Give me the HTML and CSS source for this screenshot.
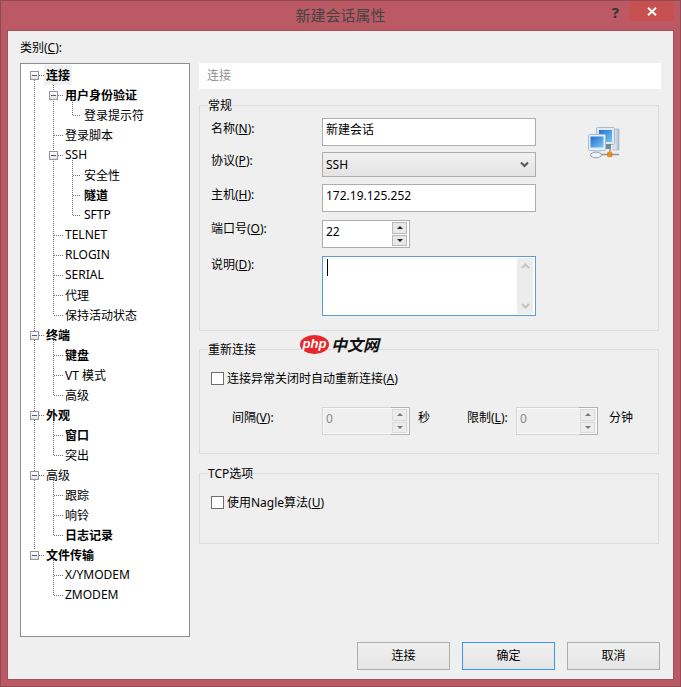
FILE: index.html
```html
<!DOCTYPE html>
<html lang="zh">
<head>
<meta charset="utf-8">
<title>新建会话属性</title>
<link rel="stylesheet" href="styles.css">
</head>
<body>
<div class="window">
  <header class="titlebar">
    <span></span>
    <h1 class="title">新建会话属性</h1>
    <div class="controls">
      <span class="help">?</span>
      <span class="close"><svg width="10" height="9" viewBox="0 0 10 9"><path d="M1 .8 9 8.2M9 .8 1 8.2" stroke="#fff" stroke-width="1.9" fill="none"/></svg></span>
    </div>
  </header>
  <main class="client">
    <div class="cat-label">类别(<u>C</u>):</div>
    <div class="content">
      <nav class="tree">
        <svg class="tree-lines" width="168" height="572" viewBox="21 64 168 572">
          <path d="M34.5 80V550M39 75.5h6M39 335.5h6M39 415.5h6M39 475.5h6M39 555.5h6
                   M53.5 85V315M58 95.5h5M54 135.5h9M58 155.5h5M54 235.5h9M54 255.5h9M54 275.5h9M54 295.5h9M54 315.5h9
                   M72.5 100V115M73 115.5h8M72.5 160V215M73 175.5h8M73 195.5h8M73 215.5h8
                   M53.5 340V395M54 355.5h9M54 375.5h9M54 395.5h9
                   M53.5 420V455M54 435.5h9M54 455.5h9
                   M53.5 480V535M54 495.5h9M54 515.5h9M54 535.5h9
                   M53.5 560V595M54 575.5h9M54 595.5h9" stroke="#6f6f6f" stroke-dasharray="1 1" fill="none" shape-rendering="crispEdges"/>
        </svg>
        <div class="row l0"><i class="exp"></i><b class="sel">连接</b></div>
        <div class="row l1"><i class="exp"></i><b>用户身份验证</b></div>
        <div class="row l2">登录提示符</div>
        <div class="row l1 leaf">登录脚本</div>
        <div class="row l1 lat"><i class="exp"></i>SSH</div>
        <div class="row l2">安全性</div>
        <div class="row l2"><b>隧道</b></div>
        <div class="row l2 lat">SFTP</div>
        <div class="row l1 leaf lat">TELNET</div>
        <div class="row l1 leaf lat">RLOGIN</div>
        <div class="row l1 leaf lat">SERIAL</div>
        <div class="row l1 leaf">代理</div>
        <div class="row l1 leaf">保持活动状态</div>
        <div class="row l0"><i class="exp"></i><b>终端</b></div>
        <div class="row l1 leaf"><b>键盘</b></div>
        <div class="row l1 leaf">VT 模式</div>
        <div class="row l1 leaf">高级</div>
        <div class="row l0"><i class="exp"></i><b>外观</b></div>
        <div class="row l1 leaf"><b>窗口</b></div>
        <div class="row l1 leaf">突出</div>
        <div class="row l0"><i class="exp"></i>高级</div>
        <div class="row l1 leaf">跟踪</div>
        <div class="row l1 leaf">响铃</div>
        <div class="row l1 leaf"><b>日志记录</b></div>
        <div class="row l0"><i class="exp"></i><b>文件传输</b></div>
        <div class="row l1 leaf lat">X/YMODEM</div>
        <div class="row l1 leaf lat">ZMODEM</div>
      </nav>
      <section class="panel">
        <div class="panel-head">连接</div>

        <div class="group group-general">
          <div class="legend">常规</div>
          <div class="form">
            <label class="lbl low">名称(<u>N</u>):</label>
            <div class="field wide">新建会话</div>
            <label class="lbl">协议(<u>P</u>):</label>
            <div class="select wide"><span>SSH</span>
              <svg width="9" height="7" viewBox="0 0 9 7"><path d="M1 1.500 4.500 5 8 1.500" stroke="#555" stroke-width="2" fill="none"/></svg>
            </div>
            <label class="lbl low">主机(<u>H</u>):</label>
            <div class="field wide">172.19.125.252</div>
            <label class="lbl">端口号(<u>O</u>):</label>
            <div class="spin">
              <span class="spin-val">22</span>
              <span class="spin-btns"><i class="up"></i><i class="down"></i></span>
            </div>
            <label class="lbl">说明(<u>D</u>):</label>
            <div class="memo wide">
              <span class="caret"></span>
              <div class="memo-scroll">
                <svg width="9" height="6" viewBox="0 0 9 6"><path d="M1 5 4.500 1.500 8 5" stroke="#c2c2c2" stroke-width="2" fill="none"/></svg>
                <svg width="9" height="6" viewBox="0 0 9 6"><path d="M1 1 4.500 4.500 8 1" stroke="#c2c2c2" stroke-width="2" fill="none"/></svg>
              </div>
            </div>
          </div>
          <svg class="net-icon" width="36" height="36" viewBox="0 0 36 36">
            <defs>
              <linearGradient id="scr" x1="0" y1="0" x2="1" y2="1">
                <stop offset="0" stop-color="#1c6fd8"/><stop offset="1" stop-color="#7cc6ee"/>
              </linearGradient>
              <linearGradient id="case" x1="0" y1="0" x2="1" y2="0">
                <stop offset="0" stop-color="#f4f7fa"/><stop offset="1" stop-color="#a9bccb"/>
              </linearGradient>
            </defs>
            <rect x="26" y="3" width="6" height="21" fill="url(#case)" stroke="#9fb0bd" stroke-width=".6"/>
            <rect x="9.500" y="1.500" width="18" height="17" rx="1" fill="#dfeaf2" stroke="#a9bac8"/>
            <rect x="12" y="4" width="13" height="12" fill="url(#scr)"/>
            <path d="M14 18h10v5H14z" fill="#6f8a9b"/>
            <path d="M12 28.500H32" stroke="#8d9aa6" stroke-width="1.600"/>
            <rect x="1.500" y="8.500" width="17" height="16" rx="1" fill="#e6f0f6" stroke="#a9bac8"/>
            <rect x="3.500" y="10.500" width="13" height="11" fill="url(#scr)"/>
            <path d="M6 24.500h8v2H6z" fill="#cfdbe3"/>
            <ellipse cx="9" cy="29" rx="5.500" ry="2.800" fill="#eef3f7" stroke="#94a6b3"/>
            <path d="M23 22.500v4" stroke="#8d9aa6" stroke-width="1.500"/>
            <rect x="20.500" y="26.200" width="4.500" height="4.500" rx=".8" fill="#ee8c10" stroke="#c66d06" stroke-width=".5"/>
          </svg>
        </div>

        <div class="group group-reconnect">
          <div class="legend">重新连接</div>
          <div class="check-row"><span class="check"></span><span>连接异常关闭时自动重新连接(<u>A</u>)</span></div>
          <div class="limits">
            <span class="lim-label lim-interval">间隔(<u>V</u>):</span>
            <div class="spin disabled">
              <span class="spin-val">0</span>
              <span class="spin-btns"><i class="up"></i><i class="down"></i></span>
            </div>
            <span class="unit unit-sec">秒</span>
            <span class="lim-label lim-max">限制(<u>L</u>):</span>
            <div class="spin disabled narrow">
              <span class="spin-val">0</span>
              <span class="spin-btns"><i class="up"></i><i class="down"></i></span>
            </div>
            <span class="unit unit-min">分钟</span>
          </div>
        </div>

        <div class="group group-tcp">
          <div class="legend">TCP选项</div>
          <div class="check-row"><span class="check"></span><span>使用Nagle算法(<u>U</u>)</span></div>
        </div>
      </section>
    </div>
    <footer class="buttons">
      <button class="btn">连接</button>
      <button class="btn primary">确定</button>
      <button class="btn">取消</button>
    </footer>
    <div class="watermark"><span class="wm-php">php</span><span class="wm-cn">中文网</span></div>
  </main>
</div>
</body>
</html>
```
FILE: styles.css
```css
* { box-sizing: border-box; }
html, body { margin: 0; padding: 0; }
body {
  width: 681px;
  height: 687px;
  overflow: hidden;
  font: 12px/20px "Noto Sans", "Noto Sans CJK SC", sans-serif;
  color: #000;
  background: #bb5a64;
}
u { text-decoration: underline; text-underline-offset: 1px; }
b { font-weight: 700; }
i { font-style: normal; }

.window {
  width: 681px;
  height: 687px;
  display: flex;
  flex-direction: column;
  padding: 0 7px 7px;
  border: 1px solid #8f4a53;
  background: #bb5a64;
}
.titlebar {
  height: 30px;
  flex: none;
  display: grid;
  grid-template-columns: 1fr auto 1fr;
}
.title {
  margin: 0;
  font-size: 15px;
  font-weight: 400;
  line-height: 28px;
  color: #444;
}
.controls { display: flex; justify-content: flex-end; align-items: flex-start; margin-right: -1px; }
.help { font-size: 15px; font-weight: 700; line-height: 22px; color: #333; margin-right: 10px; }
.close {
  width: 45px;
  height: 20px;
  background: #c75050;
  display: flex;
  align-items: center;
  justify-content: center;
}

.client {
  flex: 1;
  position: relative;
  background: #efefef;
  box-shadow: 0 0 0 1px #a4505a;
  padding: 7px 13px 0 12px;
  display: flex;
  flex-direction: column;
}
.cat-label { height: 20px; margin-bottom: 5px; }
.content { display: flex; gap: 9px; height: 574px; }

/* tree */
.tree {
  position: relative;
  width: 170px;
  flex: none;
  background: #fff;
  border: 1px solid #8a8d94;
  padding-top: 1px;
}
.tree-lines { position: absolute; left: 0; top: 0; }
.row { position: relative; height: 20px; padding-top: 2px; display: flex; align-items: center; white-space: pre; }
.row.lat { padding-top: 0; }
.l0 { padding-left: 9px; }
.l1 { padding-left: 28px; }
.l1.leaf { padding-left: 44px; }
.l2 { padding-left: 63px; }
.exp {
  position: relative;
  width: 9px;
  height: 9px;
  margin: -2px 7px 0 0;
  border: 1px solid #969696;
  background: #fff linear-gradient(#fff, #e4e4e4);
}
.lat .exp { margin-top: 0; }
.exp::after {
  content: "";
  position: absolute;
  left: 1px;
  top: 3px;
  width: 5px;
  height: 1px;
  background: #4a5a9c;
}
.sel {
  align-self: flex-start;
  height: 20px;
  margin: -2px 0 0 -2px;
  padding: 1px 2px 0;
  background: #f0f0f0;
}

/* right panel */
.panel { width: 462px; flex: none; }
.panel-head {
  height: 26px;
  line-height: 26px;
  padding-left: 8px;
  background: #fff;
  color: #8f8f8f;
  margin-bottom: 16px;
}
.group {
  position: relative;
  width: 460px;
  border: 1px solid #dcdcdc;
  padding: 0 11px;
}
.legend {
  width: fit-content;
  height: 20px;
  margin: -10px 0 -1px -3px;
  background: #efefef;
}
.group-general { height: 226px; }
.group-reconnect { height: 105px; margin-top: 18px; }
.group-tcp { height: 71px; margin-top: 19px; }

.form {
  margin-top: 3px;
  display: grid;
  grid-template-columns: 111px 214px;
  grid-template-rows: 34px 32px 36px 36px 60px;
  align-items: start;
}
.lbl { margin-top: -1px; }
.lbl.low { margin-top: 1px; }
.field, .memo, .spin { background: #fff; border: 1px solid #adadad; }
.field { height: 28px; padding: 0 3px; line-height: 21px; }
.select {
  height: 25px;
  padding: 0 6px 0 3px;
  border: 1px solid #adadad;
  background: linear-gradient(#f0f0f0, #e4e4e4);
  display: flex;
  align-items: center;
  justify-content: space-between;
}
.wide { width: 214px; }
.spin {
  position: relative;
  width: 88px;
  height: 28px;
  display: flex;
  padding: 1px;
}
.spin-val { flex: 1; padding-left: 2px; line-height: 18px; margin-top: 1px; }
.spin-btns { width: 15px; margin-right: 1px; display: flex; flex-direction: column; gap: 1px; }
.spin-btns i {
  flex: 1;
  display: flex;
  align-items: center;
  justify-content: center;
  background: #e8e8e8;
  border: 1px solid #b8b8b8;
}
.up::after, .down::after { content: ""; width: 0; height: 0; border: 3.5px solid transparent; }
.up::after { border-bottom-color: #222; border-top-width: 0; }
.down::after { border-top-color: #222; border-bottom-width: 0; }

.spin.disabled { background: #efefef; border-color: #d4d4d4; box-shadow: inset 0 0 0 1px #fafafa; }
.spin.disabled::after {
  content: "";
  position: absolute;
  top: -1px;
  right: -1px;
  bottom: -1px;
  width: 18px;
  border: 1px solid #b0b0b0;
  border-left: 0;
}
.spin.disabled .spin-val { color: #8a8a8a; }
.spin.disabled .spin-btns i { background: #ececec; border-color: #dadada; }
.spin.disabled .up::after { border-bottom-color: #777; }
.spin.disabled .down::after { border-top-color: #777; }
.spin.narrow { width: 82px; }

.memo {
  position: relative;
  height: 60px;
  border-color: #5b9bdc;
  display: flex;
  justify-content: flex-end;
  padding: 1px 2px 1px 0;
}
.caret { position: absolute; left: 4px; top: 2px; width: 1px; height: 17px; background: #000; }
.memo-scroll {
  width: 16px;
  background: #ececec;
  display: flex;
  flex-direction: column;
  align-items: center;
  justify-content: space-between;
  padding: 5px 0;
}

.net-icon { position: absolute; left: 387px; top: 20px; }

.check-row { display: flex; height: 20px; margin-top: 10px; gap: 3px; }
.check { width: 13px; height: 13px; margin-top: 3px; background: #fff; border: 1px solid #6e6e6e; }

.limits { display: flex; align-items: flex-start; margin-top: 18px; }
.lim-label, .unit { margin-top: 1px; }
.lim-interval { margin-left: 21px; width: 90px; }
.unit-sec { margin-left: 8px; width: 12px; }
.lim-max { margin-left: 37px; width: 49px; }
.unit-min { margin-left: 11px; }

/* footer buttons */
.buttons { display: flex; justify-content: flex-end; gap: 12px; margin-top: 5px; }
.btn {
  width: 93px;
  height: 28px;
  padding: 0;
  font: inherit;
  color: #000;
  border: 1px solid #adadad;
  background: linear-gradient(#f0f0f0, #e5e5e5);
}
.btn.primary { border-color: #3399ff; }

/* overlay watermark */
.watermark {
  position: absolute;
  left: 292px;
  top: 303px;
  display: flex;
  align-items: center;
  height: 20px;
}
.wm-php {
  width: 29px;
  height: 19px;
  border-radius: 50%;
  background: #e8272a;
  color: #fff;
  font: italic 700 13px/18px "Liberation Sans", sans-serif;
  text-align: center;
}
.wm-cn {
  margin: -1px 0 0 2px;
  font: italic 700 16px/20px "Noto Sans CJK SC", sans-serif;
  color: #111;
}
```
